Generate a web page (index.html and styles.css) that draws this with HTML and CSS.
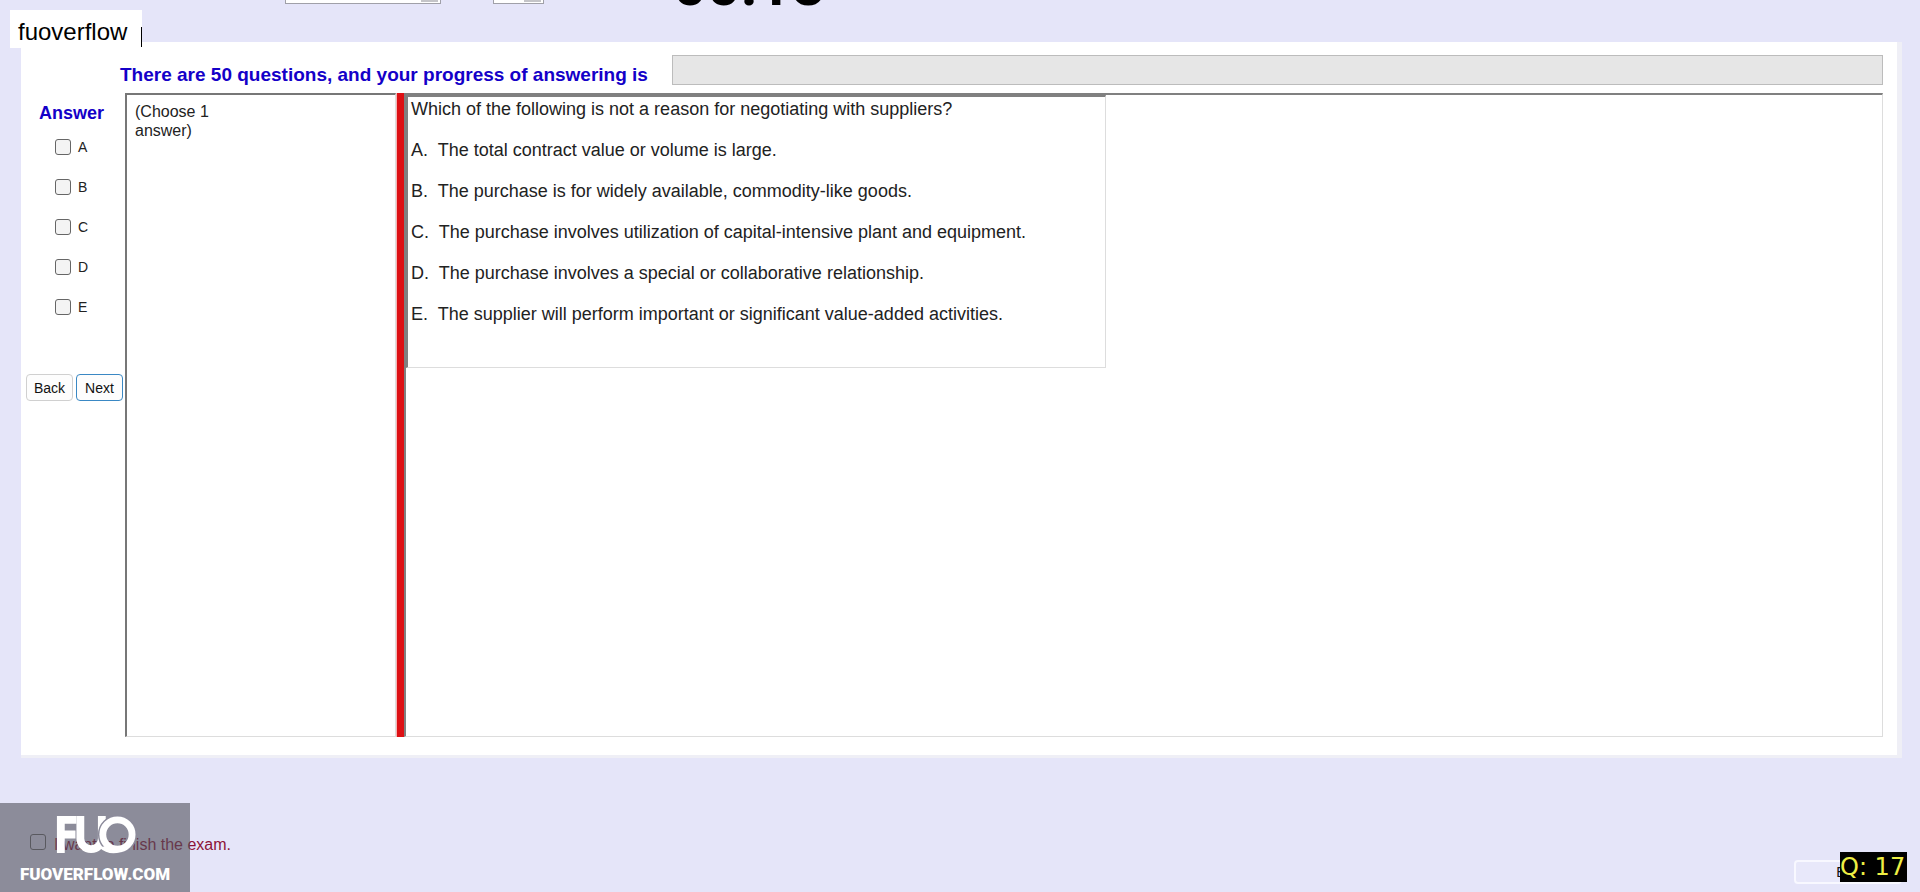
FILE: index.html
```html
<!DOCTYPE html>
<html lang="en">
<head>
  <meta charset="UTF-8">
  <title>Exam</title>
  <link rel="stylesheet" href="styles.css">
</head>
<body>
  <!-- Top bar, scrolled mostly out of view -->
  <header class="top-bar">
    <select class="font-select" aria-label="Font"><option></option></select>
    <select class="size-select" aria-label="Size"><option></option></select>
    <div class="timer">00:18</div>
  </header>
  <div class="name-tag">fuoverflow</div>

  <main class="panel">
    <div class="progress-row">
      <label for="progress">There are 50 questions, and your progress of answering is</label>
      <progress id="progress" value="0" max="50"></progress>
    </div>
    <div class="exam-row">
      <!-- Answer Selection -->
      <form class="answers">
        <h2>Answer</h2>
        <label><input type="checkbox">A</label>
        <label><input type="checkbox">B</label>
        <label><input type="checkbox">C</label>
        <label><input type="checkbox">D</label>
        <label><input type="checkbox">E</label>
        <div class="nav-buttons">
          <button type="button">Back</button>
          <button type="button" class="active">Next</button>
        </div>
      </form>
      <div class="hint">(Choose 1<br>answer)</div>
      <div class="splitter"></div>
      <!-- Question -->
      <div class="question-area">
        <div class="question">
          <p>Which of the following is not a reason for negotiating with suppliers?</p>
          <p>A.&nbsp; The total contract value or volume is large.</p>
          <p>B.&nbsp; The purchase is for widely available, commodity-like goods.</p>
          <p>C.&nbsp; The purchase involves utilization of capital-intensive plant and equipment.</p>
          <p>D.&nbsp; The purchase involves a special or collaborative relationship.</p>
          <p>E.&nbsp; The supplier will perform important or significant value-added activities.</p>
        </div>
      </div>
    </div>
  </main>

  <footer class="bottom-bar">
    <label class="finish"><input type="checkbox">I want to finish the exam.</label>
    <button type="button" class="exit">Exit</button>
  </footer>

  <!-- Overlays -->
  <div class="watermark">
    <svg width="84" height="42" viewBox="0 0 84 42">
      <path d="M7 39V5H23M7 20H22" fill="none" stroke="#fff" stroke-width="8"/>
      <path d="M27 1V24A11 11 0 0 0 49 24V1" fill="none" stroke="#fff" stroke-width="8"/>
      <circle cx="65" cy="20" r="19" fill="none" stroke="#8c8b9b" stroke-width="2"/>
      <circle cx="65" cy="20" r="15" fill="none" stroke="#fff" stroke-width="7"/>
      <path d="M46 33Q56 42 68 38L60 31Z" fill="#fff"/>
    </svg>
    <span>FUOVERFLOW.COM</span>
  </div>
  <div class="counter">Q: 17</div>
</body>
</html>
```

FILE: styles.css
```css
* {
  box-sizing: border-box;
}
body {
  margin: 0;
  height: 100vh;
  display: flex;
  flex-direction: column;
  overflow: hidden;
  background: #e5e5f9;
  color: #222;
  font-family: "Liberation Sans", Arial, sans-serif;
}
.top-bar {
  height: 42px;
  display: flex;
  align-items: flex-start;
  padding-left: 285px;
}
.top-bar select {
  height: 24px;
  margin-top: -20px;
  appearance: none;
  border: 1px solid #a0a0a8;
  background: linear-gradient(#c4c4c8, #c4c4c8) no-repeat right 2px top / 17px 21px #fff;
}
.font-select {
  width: 156px;
  margin-right: 52px;
}
.size-select {
  width: 51px;
}
.timer {
  margin: -50px 0 0 129px;
  color: #000;
  font-family: Roboto, sans-serif;
  font-size: 59px;
  font-weight: bold;
  line-height: 70px;
}
.name-tag {
  position: absolute;
  left: 10px;
  top: 10px;
  width: 132px;
  height: 38px;
  padding-left: 8px;
  background: #fff;
  color: #000;
  font-size: 24px;
  line-height: 44px;
}
.name-tag::after {
  content: "";
  position: absolute;
  right: 0;
  top: 17px;
  width: 1px;
  height: 20px;
  background: #000;
}
.panel {
  flex: 1;
  display: flex;
  flex-direction: column;
  margin: 0 18px 0 21px;
  padding: 13px 14px 18px 5px;
  border-right: 5px solid #efeff6;
  border-bottom: 3px solid #efeff6;
  background: #fff;
}
.progress-row {
  display: flex;
  gap: 24px;
  padding-left: 94px;
}
.progress-row label {
  color: #1400c8;
  font-size: 19px;
  font-weight: bold;
  line-height: 40px;
  height: 38px;
}
progress {
  flex: 1;
  height: 30px;
  appearance: none;
  border: 1px solid #bcbcbc;
  background: #e6e6e6;
}
progress::-webkit-progress-bar {
  background: #e6e6e6;
}
.exam-row {
  flex: 1;
  display: flex;
}
.answers {
  width: 99px;
}
.answers h2 {
  margin: 10px 0 16px 13px;
  color: #1400c8;
  font-size: 18px;
  line-height: 20px;
}
.answers label {
  display: flex;
  align-items: center;
  gap: 7px;
  height: 16px;
  margin: 0 0 24px 29px;
  font-size: 14px;
}
input[type="checkbox"] {
  appearance: none;
  width: 16px;
  height: 16px;
  margin: 0;
  border: 1px solid #666;
  border-radius: 3px;
  background: #f4f4f4;
}
.nav-buttons {
  display: flex;
  gap: 3px;
  margin-top: 59px;
}
button {
  width: 47px;
  height: 27px;
  padding: 0;
  border: 1px solid #d0d0d0;
  border-radius: 4px;
  background: #fdfdfd;
  color: #111;
  font-family: inherit;
  font-size: 14px;
}
button.active {
  border-color: #3a88c4;
}
.hint {
  width: 271px;
  padding: 7px 8px;
  border: 1px solid #ddd;
  border-top: 2px solid #777;
  border-left: 2px solid #777;
  font-size: 16px;
  line-height: 19px;
}
.splitter {
  width: 8px;
  border-left: 1px solid #f6b4b4;
  background: #dd1014;
}
.question-area {
  flex: 1;
  border: 1px solid #ddd;
  border-top: 2px solid #808080;
  border-left: 2px solid #808080;
}
.question {
  width: 700px;
  height: 273px;
  padding-left: 3px;
  border: 1px solid #ddd;
  border-top: 2px solid #808080;
  border-left: 2px solid #808080;
}
.question p {
  margin: 2px 0 20px;
  font-size: 18px;
  line-height: 21px;
}
.bottom-bar {
  height: 134px;
  display: flex;
  justify-content: space-between;
  padding: 76px 18px 0 30px;
}
.finish {
  display: flex;
  gap: 8px;
  height: 16px;
  color: #8c1236;
  font-size: 16px;
  line-height: 22px;
}
.finish input[type="checkbox"] {
  background: transparent;
}
.exit {
  width: 108px;
  height: 24px;
  margin-top: 26px;
  border: 2px solid #f8f8ff;
  background: #e8e8fa;
}
.watermark {
  position: absolute;
  left: 0;
  bottom: 0;
  width: 190px;
  height: 89px;
  display: flex;
  flex-direction: column;
  align-items: center;
  padding-top: 12px;
  background: rgba(80, 80, 90, 0.6);
  color: #fff;
  font-family: Roboto, sans-serif;
  font-size: 17px;
  font-weight: 900;
  line-height: 36px;
}
.counter {
  position: absolute;
  right: 13px;
  bottom: 10px;
  width: 67px;
  height: 30px;
  background: #000;
  color: #eeee44;
  font-family: "DejaVu Sans", sans-serif;
  font-size: 24px;
  line-height: 30px;
  white-space: nowrap;
}
```
